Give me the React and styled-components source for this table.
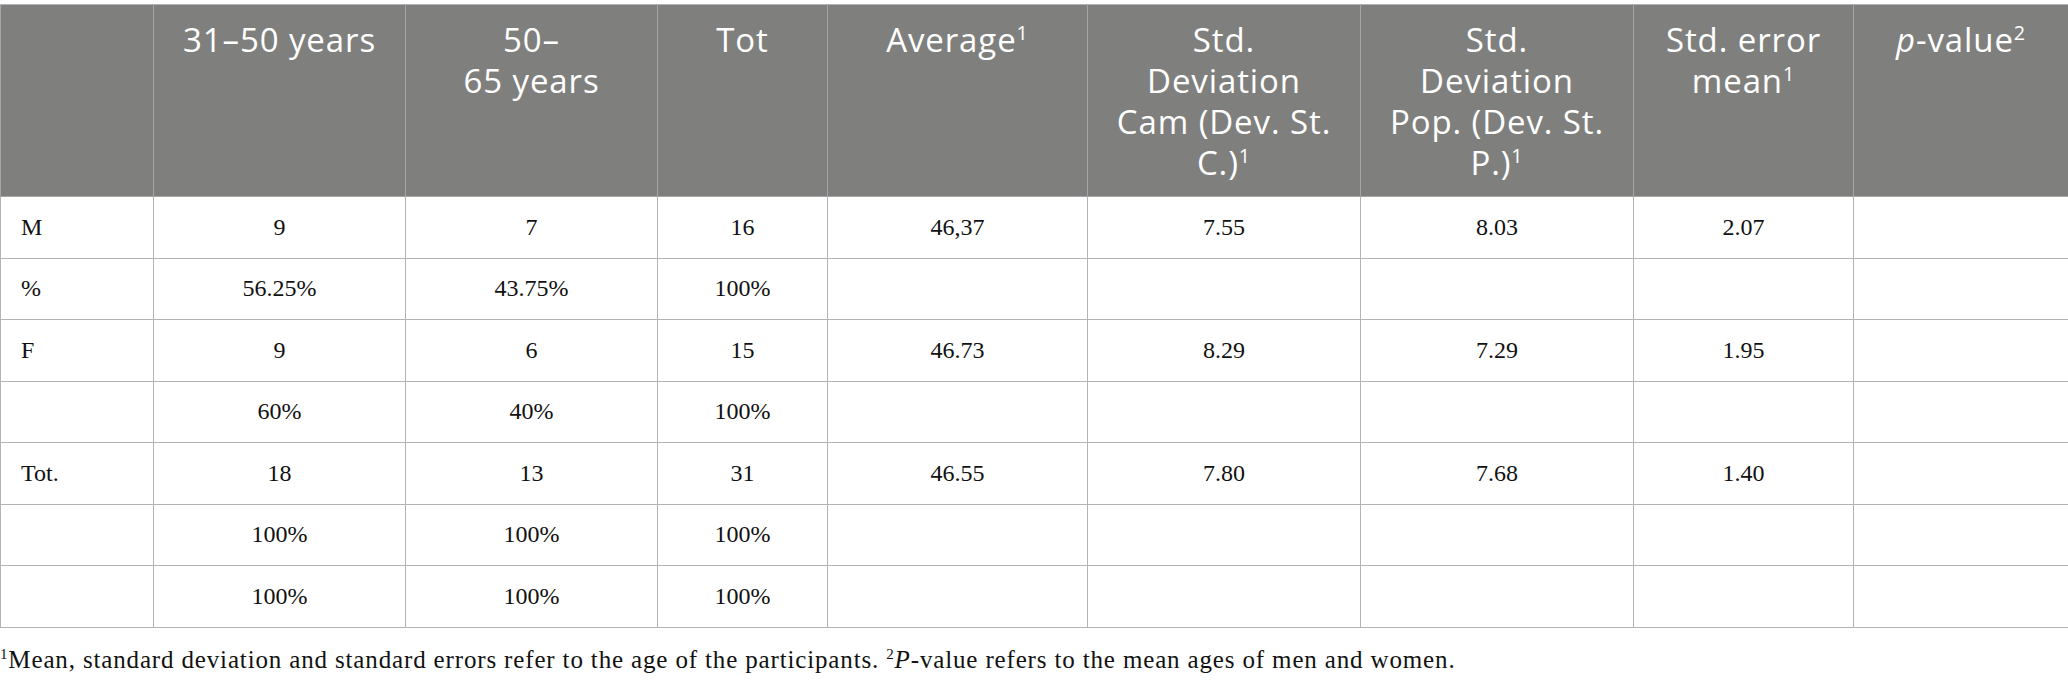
import React from "react";
import styled, { createGlobalStyle } from "styled-components";

const Global = createGlobalStyle`
  html, body { margin: 0; padding: 0; background: #ffffff; }
  body { padding-top: 4px; }
`;

const Wrap = styled.div`
  width: 2068px;
`;

const Table = styled.table`
  width: 2068px;
  border-collapse: collapse;
  table-layout: fixed;
  border: 1px solid #b3b3b3;
`;

const HeadRow = styled.tr`
  background: #7f807e;
`;

const HeadCell = styled.th`
  height: 192px;
  padding: 14px 6px 0;
  box-sizing: border-box;
  vertical-align: top;
  text-align: center;
  font-family: "Open Sans", "Liberation Sans", sans-serif;
  font-weight: 400;
  font-size: 33px;
  letter-spacing: 0.9px;
  line-height: 41px;
  color: #ffffff;
  border: 1px solid #a6a6a6;
  border-top-color: #b3b3b3;
`;

const Sup = styled.sup`
  font-size: 0.6em;
  line-height: 0;
  vertical-align: 0;
  position: relative;
  top: -0.62em;
`;

const Row = styled.tr`
  background: #ffffff;
`;

const Cell = styled.td`
  height: 61.5px;
  padding: 0 20px;
  box-sizing: border-box;
  vertical-align: middle;
  text-align: ${(p) => (p.$left ? "left" : "center")};
  font-family: "Liberation Serif", "Times New Roman", serif;
  font-size: 24px;
  color: #111111;
  border: 1px solid #b3b3b3;
`;

const Note = styled.p`
  margin: 17px 0 0;
  font-family: "Liberation Serif", "Times New Roman", serif;
  font-size: 25px;
  letter-spacing: 0.85px;
  line-height: 30px;
  color: #111111;
`;

const NoteSup = styled.sup`
  font-size: 0.6em;
  line-height: 0;
  vertical-align: 0;
  position: relative;
  top: -0.6em;
`;

const widths = [153, 252, 252, 170, 260, 273, 273, 220, 215];

const rows = [
  ["M", "9", "7", "16", "46,37", "7.55", "8.03", "2.07", ""],
  ["%", "56.25%", "43.75%", "100%", "", "", "", "", ""],
  ["F", "9", "6", "15", "46.73", "8.29", "7.29", "1.95", ""],
  ["", "60%", "40%", "100%", "", "", "", "", ""],
  ["Tot.", "18", "13", "31", "46.55", "7.80", "7.68", "1.40", ""],
  ["", "100%", "100%", "100%", "", "", "", "", ""],
  ["", "100%", "100%", "100%", "", "", "", "", ""],
];

export default function App() {
  return (
    <Wrap>
      <Global />
      <Table>
        <colgroup>
          {widths.map((w, i) => (
            <col key={i} style={{ width: w }} />
          ))}
        </colgroup>
        <thead>
          <HeadRow>
            <HeadCell />
            <HeadCell>31–50 years</HeadCell>
            <HeadCell>
              50–
              <br />
              65 years
            </HeadCell>
            <HeadCell>Tot</HeadCell>
            <HeadCell>
              Average<Sup>1</Sup>
            </HeadCell>
            <HeadCell>
              Std.
              <br />
              Deviation
              <br />
              Cam (Dev. St.
              <br />
              C.)<Sup>1</Sup>
            </HeadCell>
            <HeadCell>
              Std.
              <br />
              Deviation
              <br />
              Pop. (Dev. St.
              <br />
              P.)<Sup>1</Sup>
            </HeadCell>
            <HeadCell>
              Std. error
              <br />
              mean<Sup>1</Sup>
            </HeadCell>
            <HeadCell>
              <i>p</i>-value<Sup>2</Sup>
            </HeadCell>
          </HeadRow>
        </thead>
        <tbody>
          {rows.map((r, i) => (
            <Row key={i}>
              {r.map((c, j) => (
                <Cell key={j} $left={j === 0}>
                  {c}
                </Cell>
              ))}
            </Row>
          ))}
        </tbody>
      </Table>
      <Note>
        <NoteSup>1</NoteSup>Mean, standard deviation and standard errors refer to
        the age of the participants. <NoteSup>2</NoteSup>
        <i>P</i>-value refers to the mean ages of men and women.
      </Note>
    </Wrap>
  );
}
